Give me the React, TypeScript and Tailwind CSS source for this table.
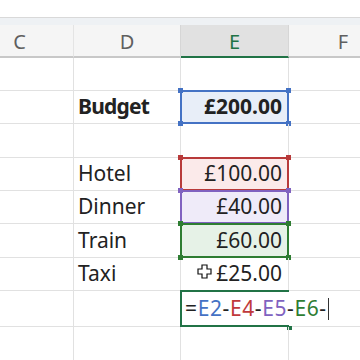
import React from "react"

type BoxProps = {
  frame: string,
  handle: string,
}

// selection / reference frame drawn over a cell, with square handles on the corners
function Box({ frame, handle }: BoxProps) {
  return (
    <div className={`absolute -left-px -top-px -right-px -bottom-px border-2 ${frame}`}>
      <div className={`absolute -left-[4px] -top-[4px] w-[5px] h-[5px] ${handle}`} />
      <div className={`absolute -right-[4px] -top-[4px] w-[5px] h-[5px] ${handle}`} />
      <div className={`absolute -left-[4px] -bottom-[4px] w-[5px] h-[5px] ${handle}`} />
      <div className={`absolute -right-[4px] -bottom-[4px] w-[5px] h-[5px] ${handle}`} />
    </div>
  )
}

type RowProps = {
  height: string,
  d?: React.ReactNode,
  e?: React.ReactNode,
}

function Row({ height, d, e }: RowProps) {
  return (
    <div className={`flex border-b border-[#e1e1e1] ${height}`}>
      <div className="w-[108px] shrink-0 border-r border-[#e1e1e1]" />
      <div className="w-[107px] shrink-0 border-r border-[#e1e1e1] flex items-center pl-[4px]">{d}</div>
      <div className="w-[108px] shrink-0 border-r border-[#e1e1e1] relative flex items-center justify-end pr-[6px]">{e}</div>
      <div className="w-[108px] shrink-0" />
    </div>
  )
}

function CellCursor() {
  return (
    <svg className="absolute left-[16px] top-[6px]" width="15" height="15" viewBox="-1 -1 15 15">
      <polygon
        points="4,0 9,0 9,4 13,4 13,9 9,9 9,13 4,13 4,9 0,9 0,4 4,4"
        fill="#fff"
        stroke="#111"
        strokeWidth="1.2"
      />
    </svg>
  )
}

export default function App() {
  return (
    <div className="w-[360px] h-[360px] overflow-hidden bg-white font-['Noto_Sans',sans-serif] text-[21px] text-[#222]">
      <div className="h-[17px]" />
      <div className="h-[8px] border-t border-[#d9d9d9] bg-[#eef1f4]" />

      <div className="-ml-[34px]">
        {/* column headers */}
        <div className="flex h-[33px] text-[20px] text-[#5f5f5f]">
          <div className="w-[108px] shrink-0 bg-[#f5f5f5] border-r border-r-[#e4e4e4] border-b-2 border-b-[#c8c8c8] flex items-center justify-center pt-[3px]">C</div>
          <div className="w-[107px] shrink-0 bg-[#f5f5f5] border-r border-r-[#d6d6d6] border-b-2 border-b-[#c8c8c8] flex items-center justify-center pt-[3px]">D</div>
          <div className="w-[108px] shrink-0 bg-[#e1e1e1] border-r border-r-[#d6d6d6] border-b-2 border-b-[#217346] text-[#217346] flex items-center justify-center pt-[3px]">E</div>
          <div className="w-[108px] shrink-0 bg-[#f5f5f5] border-b-2 border-b-[#c8c8c8] flex items-center justify-center pt-[3px]">F</div>
        </div>

        <Row height="h-[33px]" />
        <Row
          height="h-[33px]"
          d={<span className="font-bold tracking-[-0.8px]">Budget</span>}
          e={<>
            <Box frame="border-[#4472c4] bg-[#e8eef8]" handle="bg-[#4472c4]" />
            <span className="relative font-bold">£200.00</span>
          </>}
        />
        <Row height="h-[34px]" />
        <Row
          height="h-[33px]"
          d="Hotel"
          e={<>
            <Box frame="border-[#b83a3a] bg-[#fbeaea]" handle="bg-[#b83a3a]" />
            <span className="relative">£100.00</span>
          </>}
        />
        <Row
          height="h-[33px]"
          d="Dinner"
          e={<>
            <Box frame="border-[#8062c0] bg-[#efebf9]" handle="bg-[#8062c0]" />
            <span className="relative">£40.00</span>
          </>}
        />
        <Row
          height="h-[34px]"
          d="Train"
          e={<>
            <Box frame="border-[#2e7d32] bg-[#e6f2e7]" handle="bg-[#2e7d32]" />
            <span className="relative">£60.00</span>
          </>}
        />
        <Row
          height="h-[33px]"
          d="Taxi"
          e={<>
            <span className="relative">£25.00</span>
            <CellCursor />
          </>}
        />

        {/* cell being edited, the editor spills over into F */}
        <div className="flex border-b border-[#e1e1e1] h-[36px]">
          <div className="w-[108px] shrink-0 border-r border-[#e1e1e1]" />
          <div className="w-[107px] shrink-0 border-r border-[#e1e1e1]" />
          <div className="w-[108px] shrink-0 border-r border-transparent relative flex items-center pl-[4px]">
            <div className="absolute -left-px -top-px -right-px -bottom-px border-2 border-r-0 border-[#217346]">
              <div className="absolute -right-[3px] -bottom-[5px] w-[5px] h-[4px] bg-[#217346]" />
            </div>
            <div className="relative z-10 whitespace-nowrap flex items-center tracking-[0.6px]">
              <span>=</span>
              <span className="text-[#4472c4]">E2</span>
              <span>-</span>
              <span className="text-[#c0393b]">E4</span>
              <span>-</span>
              <span className="text-[#8062c0]">E5</span>
              <span>-</span>
              <span className="text-[#2e7d32]">E6</span>
              <span>-</span>
              <span className="ml-[1px] w-px h-[22px] bg-[#333]" />
            </div>
          </div>
          <div className="w-[108px] shrink-0" />
        </div>

        <Row height="h-[40px]" />
      </div>
    </div>
  )
}
